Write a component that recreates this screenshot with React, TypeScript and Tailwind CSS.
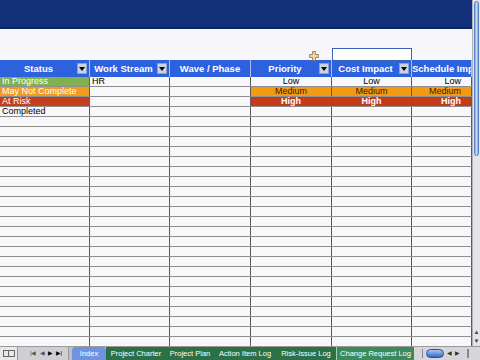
import React from 'react';

const COLS = [
  { label: 'Status', w: 'w-[90px]' },
  { label: 'Work Stream', w: 'w-[80px]' },
  { label: 'Wave / Phase', w: 'w-[81px]', noBtn: true },
  { label: 'Priority', w: 'w-[81px]' },
  { label: 'Cost Impact', w: 'w-[80px]' },
  { label: 'Schedule Imp', w: 'w-[60px]', noBtn: true },
];

const STATUS = [
  { text: 'In Progress', cls: 'bg-[#7fb24e] text-white' },
  { text: 'May Not Complete', cls: 'bg-[#f29b1f] text-white' },
  { text: 'At Risk', cls: 'bg-[#c4401c] text-white' },
  { text: 'Completed', cls: 'bg-[#f8f8fa] text-black' },
];

const LEVELS = [
  { text: 'Low', cls: 'bg-[#f8f8fa] text-black' },
  { text: 'Medium', cls: 'bg-[#f29a12] text-[#3a2000]' },
  { text: 'High', cls: 'bg-[#c33c1a] text-white font-bold' },
];

const TABS = [
  { name: 'Index', w: 'w-[34px]', active: true },
  { name: 'Project Charter', w: 'w-[60px]' },
  { name: 'Project Plan', w: 'w-[48px]' },
  { name: 'Action Item Log', w: 'w-[62px]' },
  { name: 'Risk-Issue Log', w: 'w-[60px]' },
  { name: 'Change Request Log', w: 'w-[78px]', current: true },
];

function DropBtn() {
  return (
    <div className="absolute right-[2px] top-[3px] w-[10px] h-[11px] bg-[#c9d3e6] border border-[#8fa0c0] flex items-center justify-center">
      <div className="w-0 h-0 border-l-[3px] border-r-[3px] border-t-[4px] border-l-transparent border-r-transparent border-t-black" />
    </div>
  );
}

function Cell({ w, cls = 'bg-[#f8f8fa]', children, center }: { w: string; cls?: string; children?: React.ReactNode; center?: boolean }) {
  return (
    <div className={`${w} h-full shrink-0 border-r border-[#5a5a5a] overflow-hidden whitespace-nowrap leading-[9px] px-[2px] ${center ? 'text-center' : ''} ${cls}`}>
      {children}
    </div>
  );
}

export default function App() {
  const rows = Array.from({ length: 27 });
  return (
    <div className="w-[480px] h-[360px] overflow-hidden flex flex-col bg-[#f8f8fa] text-[9px]" style={{ fontFamily: '"Liberation Sans", Arial, sans-serif' }}>
      <div className="flex flex-1 min-h-0">
        {/* sheet */}
        <div className="w-[472px] flex flex-col min-h-0 overflow-hidden">
          <div className="h-[29px] shrink-0 bg-[#12317a] border-b-2 border-[#0c2560]" />
          <div className="h-[31px] shrink-0 bg-[#f7f7fb] relative">
            <div className="absolute left-[332px] top-[19px] w-[80px] h-[13px] border-[1.5px] border-[#3a62b8] bg-white" />
            <svg className="absolute left-[309px] top-[22px]" width="10" height="10" viewBox="0 0 10 10">
              <path d="M3.5 0.5h3v3h3v3h-3v3h-3v-3h-3v-3h3z" fill="#e9d7a8" stroke="#8a7040" strokeWidth="0.8" />
            </svg>
          </div>
          {/* header */}
          <div className="h-[17px] shrink-0 flex bg-[#2e61de]">
            {COLS.map((c, i) => (
              <div key={i} className={`${c.w} shrink-0 relative border-r border-[#a8bff0] text-white font-bold text-[9.5px] leading-[17px] whitespace-nowrap overflow-hidden ${c.noBtn ? 'text-center' : 'text-center pr-[12px]'}`}>
                {c.label}
                {!c.noBtn && <DropBtn />}
              </div>
            ))}
          </div>
          {/* rows */}
          <div className="flex flex-col">
            {rows.map((_, r) => {
              const s = STATUS[r];
              const lv = LEVELS[r];
              return (
                <div key={r} className="h-[10px] shrink-0 flex border-b border-[#8e8e8e]">
                  <Cell w={COLS[0].w} cls={s ? s.cls : undefined}>{s?.text}</Cell>
                  <Cell w={COLS[1].w} cls="bg-[#f8f8fa] text-black">{r === 0 ? 'HR' : ''}</Cell>
                  <Cell w={COLS[2].w} />
                  <Cell w={COLS[3].w} cls={lv ? lv.cls : undefined} center>{lv?.text}</Cell>
                  <Cell w={COLS[4].w} cls={lv ? lv.cls : undefined} center>{lv?.text}</Cell>
                  <Cell w={COLS[5].w} cls={lv ? `${lv.cls} text-right pr-[10px]` : undefined}>{lv?.text}</Cell>
                </div>
              );
            })}
          </div>
        </div>
        {/* vertical scrollbar */}
        <div className="w-[8px] flex flex-col bg-[#e4e4e8] border-l border-[#b0b0b8]">
          <div className="h-[155px] mx-[1px] mt-[1px] rounded-full bg-gradient-to-r from-[#7ea6dc] via-[#c4daf6] to-[#7ea6dc] border border-[#5a82c0]" />
          <div className="flex-1" />
          <div className="h-[9px] flex items-center justify-center text-[6px] text-[#444]">▲</div>
          <div className="h-[9px] flex items-center justify-center text-[6px] text-[#444]">▼</div>
        </div>
      </div>
      {/* sheet tab bar */}
      <div className="h-[14px] shrink-0 flex items-stretch bg-[#cfcfd3] border-t border-[#9a9a9a] text-[7.5px]">
        <div className="w-[18px] flex items-center justify-center border-r border-[#999] bg-[#e8e8ea]">
          <div className="w-[12px] h-[7px] border border-[#666] flex">
            <div className="flex-1 border-r border-[#666]" />
            <div className="flex-1" />
          </div>
        </div>
        <div className="w-[44px] flex items-center justify-center gap-[3px] text-[6px] text-[#555] ml-[6px]">
          <span>|◀</span><span>◀</span><span className="text-black">▶</span><span className="text-black">▶|</span>
        </div>
        <div className="w-[4px] border-l border-[#999] bg-[#bdbdc2]" />
        {TABS.map((t, i) => (
          <div
            key={i}
            className={`${t.w} shrink-0 flex items-center justify-center whitespace-nowrap text-white ${t.active ? 'bg-[#6f93e0] rounded-t-[3px]' : t.current ? 'bg-[#3b8a5c] border-l border-[#9fd0b0]' : 'bg-[#2c7048]'}`}
          >
            {t.name}
          </div>
        ))}
        <div className="flex-1 flex items-center gap-[3px] pl-[8px] bg-[#d6d6da]">
          <div className="w-[1px] h-[9px] bg-[#888]" />
          <div className="w-[18px] h-[9px] rounded-full bg-gradient-to-b from-[#a8c6f2] to-[#3568c4] border border-[#2a4f98]" />
          <span className="text-[6px] text-[#333]">◀</span>
          <span className="text-[6px] text-[#333]">▶</span>
          <div className="w-[2px] h-[9px] border-x border-[#888] ml-[4px]" />
        </div>
      </div>
    </div>
  );
}
